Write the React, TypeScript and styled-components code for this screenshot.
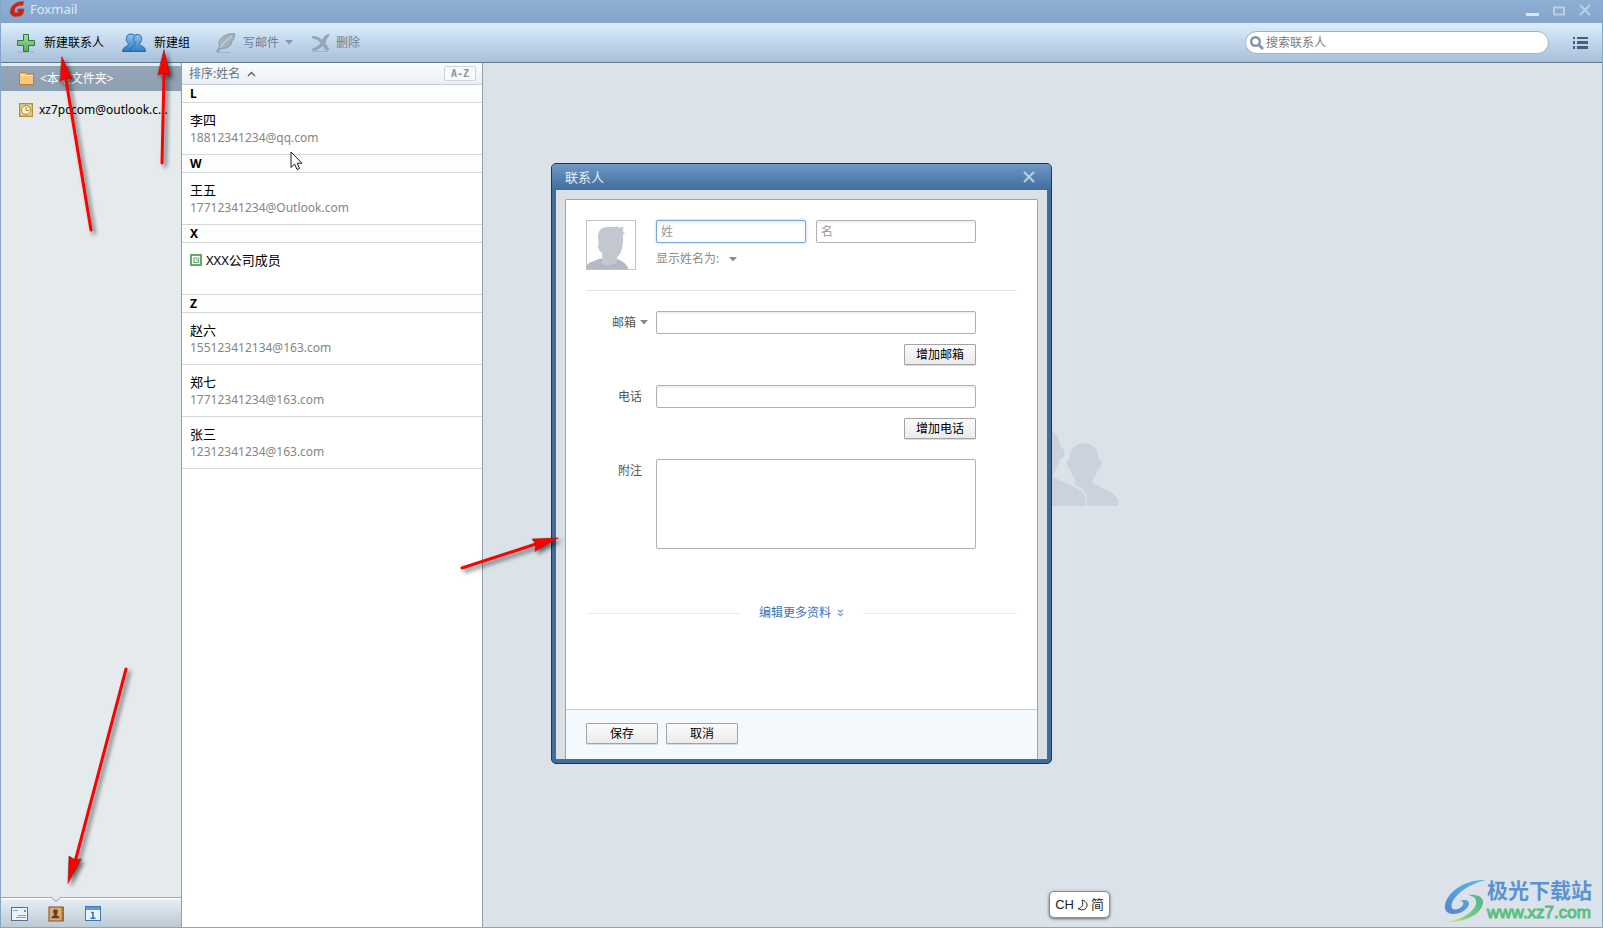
import React from "react";
import styled, { createGlobalStyle, css } from "styled-components";

const Global = createGlobalStyle`
  *, *::before, *::after { box-sizing: border-box; }
  html, body { margin: 0; padding: 0; }
  body, button, input, textarea {
    font-family: "Noto Sans", "Noto Sans CJK SC", sans-serif;
    font-size: 12px;
    line-height: 18px;
    color: #000;
  }
  svg { display: block; flex: none; }
`;

/* ---------- window frame ---------- */

const Frame = styled.div`
  position: relative;
  display: flex;
  flex-direction: column;
  min-height: 100vh;
  border: 1px solid #86a5cc;
  border-top: 0;
  background: #dbe2e9;
  overflow: hidden;
`;

const TitleBar = styled.header`
  display: flex;
  align-items: center;
  justify-content: space-between;
  height: 23px;
  padding: 0 11px 4px 8px;
  background: linear-gradient(#8eafd5, #85a4ca);
`;

const Brand = styled.h1`
  display: flex;
  align-items: center;
  gap: 5px;
  margin: 0 0 2px;
  font-size: 13px;
  font-weight: 400;
  color: #dfe9f4;
`;

const WindowControls = styled.div`
  display: flex;
  gap: 14px;
`;

const IconButton = styled.button`
  display: flex;
  align-items: center;
  justify-content: center;
  padding: 0;
  border: 0;
  background: none;
`;

/* ---------- toolbar ---------- */

const Toolbar = styled.div`
  display: flex;
  align-items: center;
  height: 40px;
  padding: 0 14px 0 15px;
  border-bottom: 1px solid #61788c;
  border-top-left-radius: 3px;
  border-top-right-radius: 3px;
  background: linear-gradient(#dbeefc, #c3d8ee 45%, #a9c0da);
`;

const ToolGroup = styled.div`
  display: flex;
  gap: 18px;
  margin-right: 26px;
`;

const ToolButton = styled.button<{ $muted?: boolean }>`
  display: flex;
  align-items: center;
  gap: ${(p) => (p.$muted ? "6px" : "8px")};
  padding: 0;
  border: 0;
  background: none;
  color: ${(p) => (p.$muted ? "#6f8093" : "#000")};
`;

const SearchBox = styled.label`
  display: flex;
  align-items: center;
  gap: 2px;
  width: 304px;
  height: 23px;
  margin: 0 24px 0 auto;
  padding: 0 12px 0 4px;
  border: 1px solid #9fb0c2;
  border-radius: 12px;
  background: #fff;
`;

const SearchInput = styled.input`
  flex: 1;
  min-width: 0;
  padding: 0;
  border: 0;
  outline: 0;
  background: none;
  &::placeholder { color: #7b7b7b; opacity: 1; }
`;

/* ---------- columns ---------- */

const Body = styled.div`
  display: flex;
  flex: 1;
`;

const Sidebar = styled.nav`
  display: flex;
  flex-direction: column;
  flex: none;
  width: 181px;
  border-right: 1px solid #939fab;
  background: #e5eaed;
`;

const FolderList = styled.ul`
  flex: 1;
  display: flex;
  flex-direction: column;
  gap: 6px;
  margin: 0;
  padding: 3px 0 0;
  list-style: none;
`;

const FolderLink = styled.a<{ $active?: boolean }>`
  display: flex;
  align-items: center;
  gap: 6px;
  height: 25px;
  padding: 0 8px 0 18px;
  color: #000;
  text-decoration: none;
  white-space: nowrap;
  ${(p) =>
    p.$active &&
    css`
      color: #fff;
      background: linear-gradient(#93a5b6, #8d9fb0);
    `}
`;

const ModuleBar = styled.div`
  position: relative;
  display: flex;
  align-items: center;
  gap: 20px;
  height: 30px;
  padding: 2px 10px 0;
  border-top: 1px solid #9dabb1;
  background: linear-gradient(#fff 1px, #e4edf2 2px, #bccad3);
`;

const Notch = styled.svg`
  position: absolute;
  left: 49px;
  top: -1px;
`;

const ContactColumn = styled.section`
  flex: none;
  width: 301px;
  border-right: 1px solid #939fab;
  background: #fff;
`;

const SortBar = styled.div`
  display: flex;
  align-items: center;
  justify-content: space-between;
  height: 22px;
  padding: 0 6px 0 7px;
  border-bottom: 1px solid #c9ced4;
  background: linear-gradient(#fafbfc, #ecf0f4);
`;

const SortButton = styled(IconButton)`
  gap: 7px;
  color: #68727d;
`;

const OrderButton = styled.button`
  height: 15px;
  width: 32px;
  padding: 0;
  border: 1px solid #cdd3d8;
  border-radius: 2px;
  background: #f7f9fa;
  color: #8997a7;
  font-family: "DejaVu Sans Mono", monospace;
  font-size: 10px;
  font-weight: 700;
  line-height: 12px;
`;

const Letter = styled.h2`
  height: 18px;
  margin: 0;
  padding-left: 8px;
  border-bottom: 1px solid #d6d7d8;
  background: #fcfdfd;
  font-size: 12px;
  font-weight: 700;
  line-height: 18px;
`;

const People = styled.ul`
  margin: 0;
  padding: 0;
  list-style: none;
`;

const Person = styled.li`
  height: 52px;
  padding: 8px 8px 0;
  border-bottom: 1px solid #d6d7d8;
`;

const PersonName = styled.div`
  display: flex;
  align-items: center;
  gap: 4px;
  font-size: 13px;
`;

const PersonMail = styled.div`
  color: #858585;
`;

const Detail = styled.main`
  flex: 1;
  display: flex;
  align-items: center;
  justify-content: center;
  padding-bottom: 54px;
`;

/* ---------- contact dialog ---------- */

const Overlay = styled.div`
  position: absolute;
  inset: 0;
  display: flex;
  align-items: center;
  justify-content: center;
`;

const Dialog = styled.form`
  display: flex;
  flex-direction: column;
  width: 501px;
  border: 1px solid #21384f;
  border-radius: 5px;
  background: #416c9c;
`;

const DialogTitle = styled.div`
  display: flex;
  align-items: center;
  justify-content: space-between;
  height: 26px;
  padding: 0 16px 0 13px;
  border-radius: 4px 4px 0 0;
  background: linear-gradient(#7099c5, #416c9c);
  color: #e3edf7;
  font-size: 13px;
`;

const DialogBody = styled.div`
  margin: 0 4px 4px;
  padding: 9px 9px 0;
  background: #dae1e6;
`;

const Sheet = styled.div`
  border: 1px solid #9ba4a9;
  border-bottom: 0;
  border-radius: 2px 2px 0 0;
  background: #fff;
`;

const Fields = styled.div`
  height: 509px;
  padding: 20px 20px 0;
`;

const NameBlock = styled.div`
  display: flex;
  gap: 20px;
  height: 71px;
  border-bottom: 1px solid #e3e3e3;
`;

const Avatar = styled.div`
  width: 50px;
  height: 50px;
  border: 1px solid #c3c3c3;
  background: #fff;
`;

const NameInputs = styled.div`
  display: grid;
  grid-template-columns: 150px 160px;
  gap: 10px;
`;

const control = css`
  display: block;
  width: 100%;
  padding: 0 4px;
  border: 1px solid #b0b0b0;
  border-radius: 2px;
  outline: 0;
  background: #fff;
  box-shadow: inset 0 2px 2px #f0f0f0;
  &::placeholder { color: #999; opacity: 1; }
`;

const TextInput = styled.input<{ $focused?: boolean }>`
  ${control}
  height: 23px;
  ${(p) =>
    p.$focused &&
    css`
      border-color: #73a7e0;
      box-shadow: 0 0 3px #a9cdf3, inset 0 2px 2px #f0f0f0;
    `}
`;

const NoteInput = styled.textarea`
  ${control}
  height: 90px;
  box-shadow: none;
  resize: none;
`;

const DisplayAs = styled(IconButton)`
  gap: 10px;
  margin-top: 7px;
  color: #8c8c8c;
`;

const FieldRow = styled.div`
  display: grid;
  grid-template-columns: 56px 320px;
  column-gap: 14px;
  margin-top: 20px;
`;

const FieldLabel = styled.label<{ $menu?: boolean }>`
  display: flex;
  align-items: center;
  justify-content: flex-end;
  gap: 4px;
  height: 23px;
  margin-right: ${(p) => (p.$menu ? "-6px" : "0")};
  color: #555;
`;

const FieldStack = styled.div`
  display: flex;
  flex-direction: column;
  align-items: flex-end;
  gap: 10px;
`;

const PushButton = styled.button`
  width: 72px;
  height: 21px;
  padding: 0;
  border: 1px solid #a3a3a3;
  border-radius: 1px;
  background: linear-gradient(#fcfcfc, #ebebeb);
  box-shadow: 0 1px 0 #dcdcdc;
  line-height: 18px;
`;

const MoreRow = styled.div`
  display: flex;
  align-items: center;
  gap: 19px;
  margin-top: 55px;
  &::before, &::after {
    content: "";
    flex: 1;
    height: 1px;
    background: #ececec;
  }
`;

const MoreLink = styled.a`
  display: flex;
  align-items: center;
  gap: 6px;
  color: #3a75b0;
  text-decoration: none;
`;

const Actions = styled.div`
  display: flex;
  gap: 8px;
  height: 50px;
  padding: 13px 20px 0;
  border-top: 1px solid #c8ced9;
  background: #f4f9fd;
`;

/* ---------- floating parts ---------- */

const InputMode = styled.div`
  position: absolute;
  right: 492px;
  bottom: 9px;
  display: flex;
  align-items: center;
  gap: 3px;
  height: 27px;
  padding: 0 5px;
  border: 1px solid #8c8c8c;
  border-radius: 5px;
  background: #fff;
  box-shadow: 0 1px 3px #666;
  color: #222;
  font-family: "Liberation Sans", "Noto Sans CJK SC", sans-serif;
  font-size: 13px;
`;

const Watermark = styled.div`
  position: absolute;
  right: 10px;
  bottom: 4px;
  display: flex;
  align-items: center;
`;

const WatermarkText = styled.div`
  display: flex;
  flex-direction: column;
  font-family: "Liberation Sans", "Noto Sans CJK SC", sans-serif;
`;

const SiteName = styled.span`
  font-size: 21px;
  font-weight: 700;
  line-height: 24px;
  color: #5b93d0;
`;

const SiteUrl = styled.span`
  font-size: 17px;
  line-height: 20px;
  color: #5cbf80;
  -webkit-text-stroke: 1px #5cbf80;
`;

const Marks = styled.svg`
  position: absolute;
  inset: 0 0 0 -1px;
  width: 100%;
  height: 100%;
  pointer-events: none;
  filter: drop-shadow(3px 3px 2px rgba(0, 0, 0, 0.55));
`;

const Pointer = styled.svg`
  position: absolute;
  left: 289px;
  top: 151px;
`;

/* ---------- drawings ---------- */

const Caret = ({ color = "#8a8a8a" }: { color?: string }) => (
  <svg width="8" height="5" viewBox="0 0 8 5">
    <path d="M0 0h8L4 4.6z" fill={color} />
  </svg>
);

const BrandIcon = () => (
  <svg width="16" height="16" viewBox="0 0 16 16">
    <path
      d="M14.5 0.500L14 4.300C10 4 6.500 5.200 5.600 8.200c-.7 2.500.2 3.600 2 3.600 1.200 0 2-.5 2.400-1.600H8.200l.9-2.300h6L14.300 12c-.8 2.400-3.200 3.500-7.300 3.500-4.200 0-6.400-2.600-5.500-6.600C2.700 3.800 8 .5 14.500.5z"
      fill="#d3210f"
      stroke="#a93a3a"
      strokeWidth=".5"
    />
  </svg>
);

const PlusIcon = () => (
  <svg width="20" height="20" viewBox="0 0 20 20">
    <defs>
      <linearGradient id="plus" x1="0" y1="0" x2="0" y2="1">
        <stop offset="0" stopColor="#a9dba4" />
        <stop offset="1" stopColor="#4fae53" />
      </linearGradient>
    </defs>
    <path d="M2 19h16" stroke="#8fa9c4" />
    <path d="M7.500 1.500h5v6h6v5h-6v6h-5v-6h-6v-5h6z" fill="url(#plus)" stroke="#327a3c" />
  </svg>
);

const GroupIcon = () => (
  <svg width="24" height="20" viewBox="0 0 24 20">
    <defs>
      <linearGradient id="group" x1="0" y1="0" x2="0" y2="1">
        <stop offset="0" stopColor="#8cc6ee" />
        <stop offset="1" stopColor="#2c7cc0" />
      </linearGradient>
    </defs>
    <g fill="url(#group)" stroke="#2669a5" strokeWidth="1">
      <path d="M9 1c3 0 4.700 1.700 4.700 4.700.6.600.4 2-.4 2.600-.3 1-.7 1.700-1.300 2.300-.2 1.700.4 2 2 2.800 2.400 1.100 3.600 2.200 4 5.100H.5c.3-2.900 1.500-4 3.700-5.100 1.700-.8 2.200-1.300 2-2.800-.6-.6-1-1.400-1.300-2.300-.8-.6-1-2-.4-2.600C4.500 2.700 6 1 9 1z" />
      <path d="M15.500 1.500c2.800 0 4 1.700 4 4.200.5.600.3 1.800-.4 2.300-.2.900-.7 1.700-1.300 2.300-.2 1.500.3 2 2 2.800 2.400 1 3.500 2.400 3.700 5.400H8c.3-3 1.400-4.200 3.600-5.300 1.500-.8 2-1.400 1.900-2.900-.6-.6-1-1.400-1.200-2.300-.8-.5-.9-1.800-.4-2.300 0-2.600 1.100-4.200 3.600-4.200z" />
    </g>
  </svg>
);

const FeatherIcon = () => (
  <svg width="21" height="20" viewBox="0 0 21 20">
    <path d="M2 19.500h13" stroke="#9db1c6" />
    <path
      d="M18.800.7C11 .2 4 4 3 9.500c-.2 1.600 0 3 .6 4.300C2.600 15.500 1.500 17 .6 18.400l1.400.5 2.900-3.700c5.600.8 9.300-1.600 10.800-5.200l-1.800.2 2.900-2.700C18.200 5 18.900 2.700 18.800.7z"
      fill="#a5b3c0"
      stroke="#8798a9"
    />
    <path d="M4.500 14.500C7 10.500 11 6.500 16 3" stroke="#dce7f1" fill="none" />
  </svg>
);

const DeleteIcon = () => (
  <svg width="19" height="20" viewBox="0 0 19 20">
    <path d="M2 18.500h15" stroke="#9db1c6" />
    <path
      d="M1.500 3.500c4-.4 7 1.300 9.500 4C12.500 4.500 14.500 2 17.500 1.500c.8 0 1 .6.500 1-2 2-3.200 4.500-4 7.500 1.500 2.200 2.800 4.500 4 6.500-1.400 1-2.700.8-3.700-.3l-2.600-3.700c-2.500 2.700-5.700 4.500-9.700 5-1-.2-1-1.200 0-1.700 3.200-1.100 5.900-3 8-5.600C8 7.500 5.500 5.700 1.500 5z"
      fill="#97a7b7"
      stroke="#8798a9"
      strokeWidth=".6"
    />
  </svg>
);

const SearchIcon = () => (
  <svg width="14" height="14" viewBox="0 0 14 14">
    <circle cx="5.500" cy="5.500" r="4.300" fill="none" stroke="#8094a8" strokeWidth="2.400" />
    <path d="M9 9l4 4" stroke="#8094a8" strokeWidth="2.600" />
  </svg>
);

const MenuIcon = () => (
  <svg width="15" height="12" viewBox="0 0 15 12">
    <path d="M0 0h2v2H0zM4 0h11v2H4zM0 4h2v3H0zM4 4h11v3H4zM0 9h2v3H0zM4 9h11v3H4z" fill="#46607b" />
  </svg>
);

const FolderIcon = () => (
  <svg width="15" height="14" viewBox="0 0 15 14">
    <path d="M.5 12.500V2L2 .5h4L7.500 2h7v10.500z" fill="#f9c87f" stroke="#b6802e" />
    <path d="M1 3.500h13" stroke="#fde6bd" />
  </svg>
);

const OutlookIcon = () => (
  <svg width="14" height="14" viewBox="0 0 14 14">
    <rect x=".7" y=".7" width="12.600" height="12.600" fill="#f3dc9c" stroke="#b48c3c" strokeWidth="1.400" />
    <circle cx="7" cy="7" r="4.500" fill="#fdf5dc" stroke="#c49a48" strokeWidth="1.300" />
    <path d="M7 4v3.500h3" fill="none" stroke="#a87f35" />
  </svg>
);

const MailModuleIcon = () => (
  <svg width="17" height="14" viewBox="0 0 17 14">
    <rect x=".5" y=".5" width="16" height="13" fill="#eaf2fb" stroke="#576f95" />
    <path d="M2 3.500h5M7 8.500h8M5 10.500h10" stroke="#86a2c6" />
    <path d="M13 3h2v2h-2z" fill="#50a38e" />
  </svg>
);

const ContactsModuleIcon = () => (
  <svg width="17" height="16" viewBox="0 0 17 16">
    <rect x="1" y="1" width="14" height="14" fill="#dfaa6c" stroke="#80502d" />
    <path d="M14 1.500h1.500v3.500H14zM14 6.300h1.500v3.500H14zM14 11h1.500v3.500H14z" fill="#c98f52" stroke="#80502d" strokeWidth=".7" />
    <path d="M7.500 3.200c1.700 0 2.400 1 2.400 2.400 0 1.200-.5 2-1.100 2.600v1.200c1.600.4 2.700.8 2.700 2.800h-8c0-2 1.100-2.400 2.700-2.800V8.200C5.600 7.600 5.100 6.800 5.100 5.600c0-1.400.7-2.400 2.400-2.400z" fill="#60402b" />
  </svg>
);

const CalendarModuleIcon = () => (
  <svg width="16" height="15" viewBox="0 0 16 15">
    <rect x=".5" y=".5" width="15" height="14" fill="#e9f2fa" stroke="#4178b0" />
    <path d="M1 1h14v3H1z" fill="#559ce8" />
    <path d="M6 6.500h2M5.500 12.200h5M8 6V12" fill="none" stroke="#3e789d" strokeWidth="1.600" />
  </svg>
);

const GroupTag = () => (
  <svg width="12" height="12" viewBox="0 0 12 12">
    <rect x="1" y="1" width="10" height="10" fill="#fff" stroke="#67a969" strokeWidth="2" />
    <path d="M9.500 4H4v4.500h4.500V6H6" fill="none" stroke="#67a969" strokeWidth="1.200" />
  </svg>
);

const CloseIcon = ({ color }: { color: string }) => (
  <svg width="12" height="12" viewBox="0 0 12 12">
    <path d="M1 1l10 10M11 1L1 11" stroke={color} strokeWidth="2.200" />
  </svg>
);

const AvatarFigure = () => (
  <svg width="48" height="48" viewBox="0 0 48 48">
    <path d="M0 48v-4c3-3.500 8-4 13-6.500h16c5 2 10 4 12.500 10.500z" fill="#b4bac5" />
    <path
      d="M11 16C11 10 14 6 21 6c4 0 7 .5 10-.8l.2 1.600 5.600-1-1.600 2.600 2 .2-1.800 2 2.600 1.800-2 1.600c.5 7-.5 12-2 17-1.500 3-3.500 5-4.500 6.500v3.500c-3 3-12 5-15.500.5 1.500-2.500 1.500-7 .8-10.500-1.800-.2-2.500-1.500-3.500-4-.6-1.700-.6-3 .3-3.600z"
      fill="#c3c8d0"
    />
  </svg>
);

const EmptyFigure = () => (
  <svg width="152" height="78" viewBox="0 0 152 78">
    <g fill="#cbd2dc">
      <path d="M117 14.500c9 0 14.500 6 14.500 15.500 3 .5 4 3 3 6-.8 2.500-2 3.500-3.500 3.500-1 4.500-3 8-5.500 11.500v3c7 4 15 7 21 11.500 3.500 2.300 5 4.500 5 6.500l-1 5H120V67c0-3-5-7.500-13-12.500 1.800-1 2.200-2 1.200-3.500-2-3-4-7-5-11.500-2.500-.5-4-3.500-3.600-6 .3-2 1.400-3.300 3-3.500C102.500 20.500 108 14.500 117 14.500z" />
      <path d="M35 14.500c-9 0-14.500 6-14.500 15.500-3 .5-4 3-3 6 .8 2.500 2 3.500 3.500 3.500 1 4.500 3 8 5.500 11.500v3c-7 4-15 7-21 11.500C2 67.800.5 70 .5 72l1 5H32V67c0-3 5-7.500 13-12.500-1.800-1-2.200-2-1.200-3.500 2-3 4-7 5-11.500 2.500-.5 4-3.500 3.600-6-.3-2-1.400-3.300-3-3.500C49.500 20.500 44 14.500 35 14.500z" />
      <path d="M76 0c11 0 17 7 17.500 18.500 3 .5 4.500 3.500 3.700 7-.7 3-2.200 4.500-4.200 4.500-1.200 6-3.500 10.500-7 15v3c9 4.500 19 8 26 12.500 4.500 3 6.500 5 6.500 8V77h-85v-8.500c0-3 2-5 6.500-8 7-4.500 17-8 26-12.500v-3c-3.500-4.500-5.800-9-7-15-2 0-3.500-1.500-4.200-4.500-.8-3.500.7-6.500 3.700-7C59 7 65 0 76 0z" />
    </g>
  </svg>
);

const SiteLogo = () => (
  <svg width="43" height="44" viewBox="0 0 43 44">
    <defs>
      <linearGradient id="blue" x1="1" y1="0" x2="0" y2="1">
        <stop offset="0" stopColor="#57bdea" />
        <stop offset="1" stopColor="#5785cf" />
      </linearGradient>
      <linearGradient id="green" x1="1" y1="0" x2="0" y2="1">
        <stop offset="0" stopColor="#4cb694" />
        <stop offset=".6" stopColor="#7cc983" />
        <stop offset="1" stopColor="#f0ea5c" />
      </linearGradient>
    </defs>
    <path d="M42 1C25 0 8 9 2 22-1 30 2 35 9 35c8 0 15-5 16-10 0-4-4-5-9-3 3 0 4 2 3 4-2 4-9 6-11 3C5 22 19 6 42 1z" fill="url(#blue)" />
    <path d="M24 16c8-1 14 1 15 6 1 10-14 22-37 21 15-2 28-10 30-18 1-5-2-8-8-9z" fill="url(#green)" />
  </svg>
);

/* ---------- data ---------- */

type Contact = { name: string; mail?: string };

const groups: { letter: string; people: Contact[] }[] = [
  { letter: "L", people: [{ name: "李四", mail: "18812341234@qq.com" }] },
  { letter: "W", people: [{ name: "王五", mail: "17712341234@Outlook.com" }] },
  { letter: "X", people: [{ name: "XXX公司成员" }] },
  {
    letter: "Z",
    people: [
      { name: "赵六", mail: "155123412134@163.com" },
      { name: "郑七", mail: "17712341234@163.com" },
      { name: "张三", mail: "12312341234@163.com" },
    ],
  },
];

/* ---------- page ---------- */

const ContactDialog = () => (
  <Overlay>
    <Dialog role="dialog" aria-label="联系人" onSubmit={(e) => e.preventDefault()}>
      <DialogTitle>
        联系人
        <IconButton type="button" aria-label="关闭">
          <CloseIcon color="#b7cde4" />
        </IconButton>
      </DialogTitle>
      <DialogBody>
        <Sheet>
          <Fields>
            <NameBlock>
              <Avatar>
                <AvatarFigure />
              </Avatar>
              <div>
                <NameInputs>
                  <TextInput $focused aria-label="姓" placeholder="姓" />
                  <TextInput aria-label="名" placeholder="名" />
                </NameInputs>
                <DisplayAs type="button">
                  显示姓名为:
                  <Caret />
                </DisplayAs>
              </div>
            </NameBlock>
            <FieldRow>
              <FieldLabel htmlFor="mail" $menu>
                邮箱
                <Caret />
              </FieldLabel>
              <FieldStack>
                <TextInput id="mail" type="email" />
                <PushButton type="button">增加邮箱</PushButton>
              </FieldStack>
            </FieldRow>
            <FieldRow>
              <FieldLabel htmlFor="phone">电话</FieldLabel>
              <FieldStack>
                <TextInput id="phone" type="tel" />
                <PushButton type="button">增加电话</PushButton>
              </FieldStack>
            </FieldRow>
            <FieldRow>
              <FieldLabel htmlFor="note">附注</FieldLabel>
              <NoteInput id="note" />
            </FieldRow>
            <MoreRow>
              <MoreLink href="#more">
                编辑更多资料
                <svg width="7" height="8" viewBox="0 0 7 8">
                  <path d="M1 1l2.500 2L6 1M1 4.500l2.500 2 2.500-2" fill="none" stroke="#7f9fc6" strokeWidth="1.400" />
                </svg>
              </MoreLink>
            </MoreRow>
          </Fields>
          <Actions>
            <PushButton type="submit">保存</PushButton>
            <PushButton type="button">取消</PushButton>
          </Actions>
        </Sheet>
      </DialogBody>
    </Dialog>
  </Overlay>
);

export default function App() {
  return (
    <>
      <Global />
      <Frame>
        <TitleBar>
          <Brand>
            <BrandIcon />
            Foxmail
          </Brand>
          <WindowControls>
            <IconButton aria-label="最小化">
              <svg width="13" height="12" viewBox="0 0 13 12">
                <path d="M0 9h13v3H0z" fill="#d9e6f3" />
              </svg>
            </IconButton>
            <IconButton aria-label="最大化">
              <svg width="12" height="12" viewBox="0 0 12 12">
                <path d="M1 3.500h10v7H1z" fill="none" stroke="#b8cfe7" strokeWidth="2" />
              </svg>
            </IconButton>
            <IconButton aria-label="关闭窗口">
              <CloseIcon color="#b8cfe7" />
            </IconButton>
          </WindowControls>
        </TitleBar>

        <Toolbar>
          <ToolGroup>
            <ToolButton>
              <PlusIcon />
              新建联系人
            </ToolButton>
            <ToolButton>
              <GroupIcon />
              新建组
            </ToolButton>
          </ToolGroup>
          <ToolGroup>
            <ToolButton $muted>
              <FeatherIcon />
              写邮件
              <Caret color="#8799ab" />
            </ToolButton>
            <ToolButton $muted>
              <DeleteIcon />
              删除
            </ToolButton>
          </ToolGroup>
          <SearchBox>
            <SearchIcon />
            <SearchInput type="search" aria-label="搜索联系人" placeholder="搜索联系人" />
          </SearchBox>
          <IconButton aria-label="菜单">
            <MenuIcon />
          </IconButton>
        </Toolbar>

        <Body>
          <Sidebar>
            <FolderList>
              <li>
                <FolderLink href="#local" $active>
                  <FolderIcon />
                  &lt;本地文件夹&gt;
                </FolderLink>
              </li>
              <li>
                <FolderLink href="#outlook" title="Outlook">
                  <OutlookIcon />
                  xz7pccom@outlook.c...
                </FolderLink>
              </li>
            </FolderList>
            <ModuleBar>
              <Notch width="12" height="6" viewBox="0 0 12 6">
                <path d="M1 0h10L6 4.500z" fill="#e5eaed" />
                <path d="M1 0l5 4.500L11 0" fill="none" stroke="#8f9ea6" />
              </Notch>
              <IconButton aria-label="邮件">
                <MailModuleIcon />
              </IconButton>
              <IconButton aria-label="联系人">
                <ContactsModuleIcon />
              </IconButton>
              <IconButton aria-label="日历">
                <CalendarModuleIcon />
              </IconButton>
            </ModuleBar>
          </Sidebar>

          <ContactColumn>
            <SortBar>
              <SortButton>
                排序:姓名
                <svg width="9" height="6" viewBox="0 0 9 6">
                  <path d="M1 5l3.500-3.500L8 5" fill="none" stroke="#5e6a76" strokeWidth="1.500" />
                </svg>
              </SortButton>
              <OrderButton>A-Z</OrderButton>
            </SortBar>
            {groups.map((group) => (
              <section key={group.letter}>
                <Letter>{group.letter}</Letter>
                <People>
                  {group.people.map((person) => (
                    <Person key={person.name}>
                      <PersonName>
                        {!person.mail && <GroupTag />}
                        {person.name}
                      </PersonName>
                      {person.mail && <PersonMail>{person.mail}</PersonMail>}
                    </Person>
                  ))}
                </People>
              </section>
            ))}
          </ContactColumn>

          <Detail>
            <EmptyFigure />
          </Detail>
        </Body>

        <ContactDialog />

        <InputMode>
          CH
          <svg width="11" height="12" viewBox="0 0 11 12">
            <path d="M5 1c5 1 7 6 3 9-2 1.300-5 1.200-7-.5C5 9.500 7 5 5 1z" fill="none" stroke="#222" />
          </svg>
          简
        </InputMode>

        <Watermark>
          <SiteLogo />
          <WatermarkText>
            <SiteName>极光下载站</SiteName>
            <SiteUrl>www.xz7.com</SiteUrl>
          </WatermarkText>
        </Watermark>

        <Pointer width="14" height="20" viewBox="0 0 14 20">
          <path d="M1 1v15.500l3.600-3.400L7 18.500l2.500-1L7.200 12.200H12z" fill="#fff" stroke="#1a1a2a" />
        </Pointer>

        <Marks>
          <g stroke="#f00" strokeWidth="3" strokeLinecap="round" fill="#f00">
            <path d="M91 230L66 80M162 163L164 74M126 669L75 862M462 568L536 544" />
            <g stroke="#8c1010" strokeWidth=".6">
              <path d="M62 57L72 79 66 78 60 82z" />
              <path d="M164 50L170 76 164 73 158 75z" />
              <path d="M68 883L69 856 75 860 81 859z" />
              <path d="M558 538L532 539 536 544 535 551z" />
            </g>
          </g>
        </Marks>
      </Frame>
    </>
  );
}
